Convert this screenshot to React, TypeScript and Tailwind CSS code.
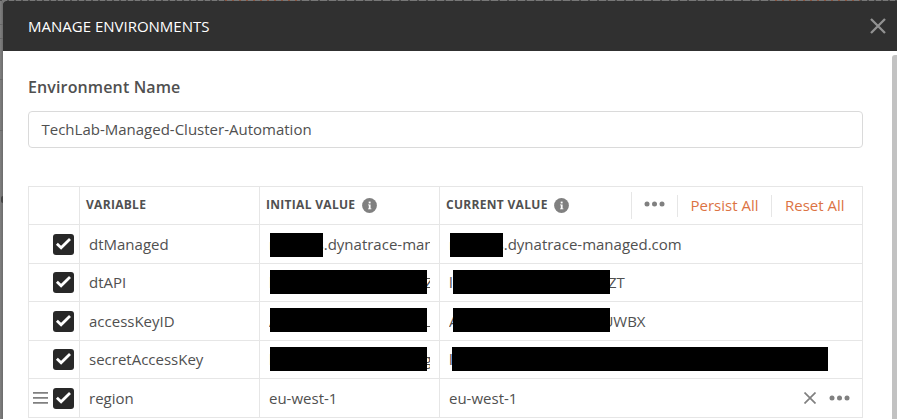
import React from "react";

type Value = {
  prefix?: string;
  lead?: string;
  bar?: string;
  suffix?: string;
  suffixClass?: string;
};

type Row = {
  name: string;
  height: string;
  initial: Value;
  current: Value;
  active?: boolean;
};

const rows: Row[] = [
  {
    name: "dtManaged",
    height: "h-[39px]",
    initial: { prefix: "r", lead: "w-[1.4px]", bar: "mt-[2px] w-[52.2px]", suffix: "s.dynatrace-managed.com", suffixClass: "-ml-[6px]" },
    current: { prefix: "r", lead: "w-[1.4px]", bar: "mt-[2px] w-[52.2px]", suffix: "s.dynatrace-managed.com", suffixClass: "-ml-[6px]" },
  },
  {
    name: "dtAPI",
    height: "h-[38px]",
    initial: { prefix: "l", lead: "w-[1.4px]", bar: "mb-px w-[157px]", suffix: "Z", suffixClass: "-ml-[3px]" },
    current: { prefix: "lo", lead: "w-[4.4px]", bar: "mb-px w-[157px]", suffix: "ZT", suffixClass: "-ml-[2.4px]" },
  },
  {
    name: "accessKeyID",
    height: "h-[39px]",
    initial: { prefix: "A", lead: "w-[1.4px]", bar: "mb-[3px] w-[157px]", suffix: "L", suffixClass: "-ml-[4px]" },
    current: { prefix: "A", lead: "w-[4.4px]", bar: "mb-[3px] w-[157px]", suffix: "UWBX", suffixClass: "-ml-[8px]" },
  },
  {
    name: "secretAccessKey",
    height: "h-[38px]",
    initial: { prefix: "l", lead: "w-[1.4px]", bar: "mb-[2px] w-[157px]", suffix: "g", suffixClass: "-ml-[4px]" },
    current: { prefix: "l", lead: "w-[3.2px]", bar: "mb-[2px] w-[375.5px]" },
  },
  {
    name: "region",
    height: "h-[39px]",
    initial: { prefix: "eu-west-1" },
    current: { prefix: "eu-west-1" },
    active: true,
  },
];

function InfoIcon() {
  return (
    <svg width="15" height="15" viewBox="0 0 15 15" className="shrink-0">
      <circle cx="7.5" cy="7.5" r="7.4" fill="#808080" />
      <rect x="6.7" y="3.6" width="1.9" height="1.8" fill="#fff" />
      <path d="M6 6.4h2.6v4h.8v.9H6v-.9h.8V7.3H6z" fill="#fff" />
    </svg>
  );
}

function Dots() {
  return (
    <svg width="21" height="6" viewBox="0 0 21 6" fill="#808080" className="shrink-0">
      <circle cx="3" cy="3" r="2.5" />
      <circle cx="10.5" cy="3" r="2.5" />
      <circle cx="18" cy="3" r="2.5" />
    </svg>
  );
}

function Checkbox() {
  return (
    <span className="flex h-[21px] w-[21px] shrink-0 items-center justify-center rounded-[3px] bg-[#282828]">
      <svg width="21" height="21" viewBox="0 0 21 21" fill="none" stroke="#fff" strokeWidth="2.8">
        <path d="M3.9 9.8l4.2 4L17 5.1" />
      </svg>
    </span>
  );
}

function ValueText({ value }: { value: Value }) {
  if (!value.bar) {
    return <span>{value.prefix}</span>;
  }
  return (
    <div className="flex min-w-0 flex-1 items-center overflow-hidden whitespace-nowrap">
      <span className={`${value.lead} shrink-0`}>{value.prefix}</span>
      <span className={`${value.bar} relative z-10 h-6 shrink-0 bg-black`} />
      {value.suffix && <span className={`${value.suffixClass} shrink-0`}>{value.suffix}</span>}
    </div>
  );
}

export default function App() {
  return (
    <div className="flex h-[419px] w-[897px] flex-col overflow-hidden bg-[#777] font-['Open_Sans',sans-serif] text-[#505050]">
      <div className="flex h-px shrink-0">
        <div className="w-[225px] bg-[repeating-linear-gradient(90deg,#4c4c4c_0_2px,#777_2px_7px)]" />
        <div className="w-[75px] bg-[repeating-linear-gradient(90deg,#8a5540_0_2px,#777_2px_7px)]" />
        <div className="w-[475px] bg-[repeating-linear-gradient(90deg,#4c4c4c_0_2px,#777_2px_9px)]" />
        <div className="w-[85px] bg-[repeating-linear-gradient(90deg,#8a5540_0_2px,#777_2px_7px)]" />
        <div className="flex-1 bg-[repeating-linear-gradient(90deg,#4c4c4c_0_2px,#777_2px_7px)]" />
      </div>
      <div className="flex min-h-0 flex-1">
        <div className="flex w-[3px] shrink-0 flex-col bg-linear-to-r from-[#808080] to-[#6c6c6c]">
          <div className="mt-[23px] h-px bg-[#686868]" />
          <div className="mt-[13px] h-px bg-[#686868]" />
          <div className="mt-[40px] h-px bg-[#686868]" />
          <div className="mt-[50px] h-px bg-[#686868]" />
          <div className="ml-px mt-[65px] h-[7px] rounded-l-full bg-[#444]" />
        </div>
        <div className="flex min-w-0 flex-1 flex-col overflow-hidden rounded-tl-[3px] bg-white">
          <header className="flex h-[50px] shrink-0 items-center justify-between bg-[#303030] pl-[25px] pr-[11px]">
            <h1 className="text-[15px] leading-5 text-white">MANAGE ENVIRONMENTS</h1>
            <svg width="16" height="16" viewBox="0 0 16 16" fill="none" stroke="#929292" strokeWidth="2.3">
              <path d="M1 1l14 14M15 1L1 15" />
            </svg>
          </header>
          <div className="flex min-h-0 flex-1">
            <main className="ml-[25px] w-[835px] shrink-0">
              <label className="mt-[25px] block text-[16px] font-semibold leading-[22px] tracking-[0.13px]">Environment Name</label>
              <div className="mt-[13px] flex h-[37px] items-center rounded-[4px] border border-[#dadada] pl-[12.5px] text-[15px]">
                TechLab-Managed-Cluster-Automation
              </div>
              <div className="mt-[38px] border-l border-r border-t border-[#e6e6e6] text-[15px]">
                <div className="flex h-[38px] border-b border-[#e6e6e6] text-[12px] font-bold tracking-[0.3px]">
                  <div className="w-[51px] border-r border-[#e6e6e6]" />
                  <div className="flex w-[180px] items-center border-r border-[#e6e6e6] pb-[2px] pl-[6px]">VARIABLE</div>
                  <div className="flex w-[180px] items-center border-r border-[#e6e6e6] pl-[6px]">
                    <span className="w-[96px] pb-[2px]">INITIAL VALUE</span>
                    <InfoIcon />
                  </div>
                  <div className="flex flex-1 items-center pl-[6px]">
                    <span className="w-[108px] whitespace-nowrap pb-[2px]">CURRENT VALUE</span>
                    <InfoIcon />
                    <div className="ml-auto flex items-center text-[15px] font-normal tracking-normal text-[#dc7343]">
                      <div className="flex h-[27px] w-[46px] items-center justify-center border-l border-[#e6e6e6] pb-[3px]">
                        <Dots />
                      </div>
                      <div className="flex h-[22px] w-[94px] items-center justify-center border-l border-[#e6e6e6]">Persist All</div>
                      <div className="flex h-[22px] w-[91px] items-center border-l border-[#e6e6e6] pl-[13px]">Reset All</div>
                    </div>
                  </div>
                </div>
                {rows.map((row) => (
                  <div key={row.name} className={`${row.height} flex border-b border-[#e6e6e6]`}>
                    <div className="flex w-[51px] items-center justify-end gap-[5px] border-r border-[#e6e6e6] pr-[5px]">
                      {row.active && (
                        <svg width="15" height="12" viewBox="0 0 15 12" fill="#808080">
                          <path d="M0 0h15v1.8H0zM0 5h15v1.8H0zM0 10h15v1.8H0z" />
                        </svg>
                      )}
                      <Checkbox />
                    </div>
                    <div className="flex w-[180px] items-center border-r border-[#e6e6e6] pl-[9px]">{row.name}</div>
                    <div className="flex w-[180px] items-center border-r border-[#e6e6e6] pl-[9px] pr-[9px]">
                      <ValueText value={row.initial} />
                    </div>
                    <div className="flex min-w-0 flex-1 items-center pl-[9px] pr-[12px]">
                      <ValueText value={row.current} />
                      {row.active && (
                        <div className="ml-auto flex items-center gap-[13px]">
                          <svg width="12" height="12" viewBox="0 0 12 12" fill="none" stroke="#808080" strokeWidth="1.7">
                            <path d="M.5.5l11 11M11.5.5l-11 11" />
                          </svg>
                          <Dots />
                        </div>
                      )}
                    </div>
                  </div>
                ))}
              </div>
            </main>
            <div className="ml-auto mt-1 w-[5px] rounded-tl-[3px] bg-[#c2c2c2]" />
          </div>
        </div>
      </div>
    </div>
  );
}
